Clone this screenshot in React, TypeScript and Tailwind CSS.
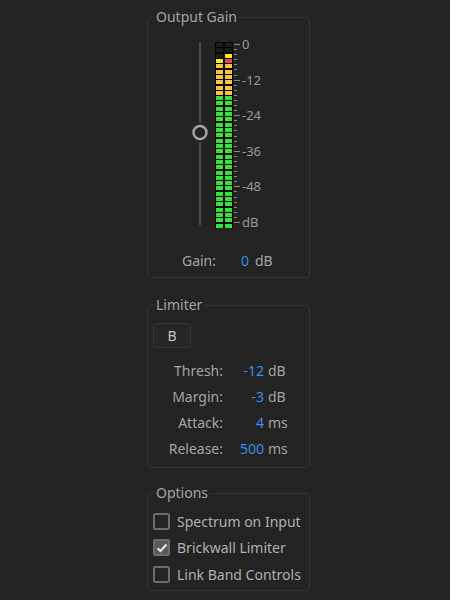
import React from "react";

const ROWS = 35;
const PITCH = 186 / ROWS;

// colour of each meter cell, [left, right], top row first
const cellColour = (i: number): [string, string] => {
  if (i < 2) return ["#1b1b1b", "#1b1b1b"];
  if (i === 2) return ["#1b1b1b", "#ffe81a"];
  if (i === 3) return ["#ffe81a", "#e8474a"];
  if (i < 10) return ["#f4c544", "#f4c544"];
  return ["#35e23a", "#35e23a"];
};

const Meter = () => {
  const rows = Array.from({ length: ROWS }, (_, i) => i);
  const ticks = Array.from({ length: 36 }, (_, k) => k);
  return (
    <svg width={53} height={194} viewBox="0 0 53 194" shapeRendering="crispEdges">
      {/* slider track + knob */}
      <rect x={11} y={6} width={2} height={183} fill="#4a4a4a" />
      <circle cx={12} cy={96.5} r={10} fill="#232323" shapeRendering="auto" />
      <circle cx={12} cy={96.5} r={6.5} fill="#232323" stroke="#a3a3a3" strokeWidth={2.5} shapeRendering="auto" />

      {/* meter */}
      <rect x={27} y={6} width={18} height={186} fill="#050505" />
      {rows.map((i) => {
        const [l, r] = cellColour(i);
        const y = 6 + i * PITCH + 1;
        return (
          <g key={i}>
            <rect x={28} y={y} width={7} height={4} fill={l} />
            <rect x={37} y={y} width={7} height={4} fill={r} />
          </g>
        );
      })}

      {/* scale ticks */}
      {ticks.map((k) => {
        const y = Math.round(8 + k * (178 / 35)) + 0.5;
        const major = k % 7 === 0;
        return (
          <line key={k} x1={46} x2={major ? 52 : 49} y1={y} y2={y} stroke="#8a8a8a" strokeWidth={1} />
        );
      })}
    </svg>
  );
};

const Panel = ({ title, children, className = "" }: { title: string; children: React.ReactNode; className?: string }) => (
  <fieldset className={`w-[163px] border border-[#343434] rounded-[4px] px-[5px] ${className}`}>
    <legend className="ml-[1px] px-[2px] text-[14px] leading-[20px] text-[#a3a3a3]">{title}</legend>
    {children}
  </fieldset>
);

const ParamRow = ({ label, value, unit }: { label: string; value: string; unit: string }) => (
  <div className="flex items-center h-[26px] text-[14px]">
    <span className="w-[70px] text-right text-[#a3a3a3]">{label}</span>
    <span className="w-[41px] text-right text-[#3b8fe6]">{value}</span>
    <span className="ml-[4px] text-[#a3a3a3]">{unit}</span>
  </div>
);

const Check = ({ label, checked }: { label: string; checked?: boolean }) => (
  <div className="flex items-center h-[26.5px] gap-[7px]">
    <span
      className={`w-[17px] h-[17px] rounded-[2px] border-2 border-[#6b6b6b] flex items-center justify-center ${
        checked ? "bg-[#5a5a5a]" : ""
      }`}
    >
      {checked && (
        <svg width="12" height="10" viewBox="0 0 12 10">
          <path d="M1.5 5.2 L4.5 8 L10.5 1.5" fill="none" stroke="#e6e6e6" strokeWidth="2.2" />
        </svg>
      )}
    </span>
    <span className="text-[14px] text-[#b0b0b0]">{label}</span>
  </div>
);

export default function App() {
  return (
    <div
      className="w-[450px] h-[600px] bg-[#232323] pl-[147px] pt-[7px] flex flex-col"
      style={{ fontFamily: '"Noto Sans", "Open Sans", sans-serif' }}
    >
      {/* Output Gain */}
      <Panel title="Output Gain" className="pb-[7px]">
        <div className="flex mt-[9px] ml-[35px]">
          <Meter />
          <div className="flex flex-col justify-between h-[194px] ml-[1px] text-[13px] leading-[16px] text-[#9a9a9a]">
            <span>0</span>
            <span>-12</span>
            <span>-24</span>
            <span>-36</span>
            <span>-48</span>
            <span>dB</span>
          </div>
        </div>
        <div className="flex items-center h-[20px] mt-[20px] text-[14px]">
          <span className="w-[63px] text-right text-[#a3a3a3]">Gain:</span>
          <span className="w-[33px] text-right text-[#3b8fe6]">0</span>
          <span className="ml-[6px] text-[#a3a3a3]">dB</span>
        </div>
      </Panel>

      {/* Limiter */}
      <Panel title="Limiter" className="mt-[17px] pb-[6px]">
        <button className="mt-[8px] w-[38px] h-[25px] bg-[#262626] border border-[#363636] rounded-[3px] text-[14px] text-[#c4c4c4]">
          B
        </button>
        <div className="mt-[9px] flex flex-col">
          <ParamRow label="Thresh:" value="-12" unit="dB" />
          <ParamRow label="Margin:" value="-3" unit="dB" />
          <ParamRow label="Attack:" value="4" unit="ms" />
          <ParamRow label="Release:" value="500" unit="ms" />
        </div>
      </Panel>

      {/* Options */}
      <Panel title="Options" className="mt-[15px] pb-[2px]">
        <div className="mt-[5px] flex flex-col">
          <Check label="Spectrum on Input" />
          <Check label="Brickwall Limiter" checked />
          <Check label="Link Band Controls" />
        </div>
      </Panel>
    </div>
  );
}
